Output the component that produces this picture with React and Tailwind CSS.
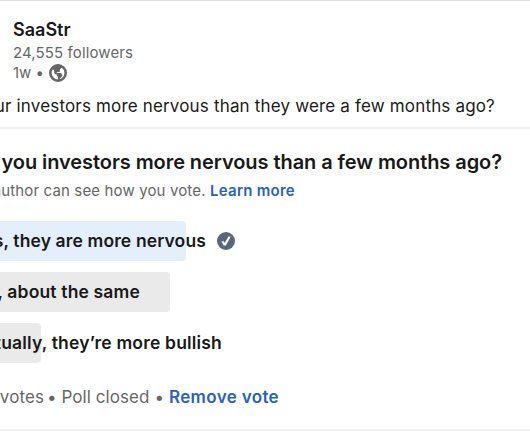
function GlobeIcon() {
  return (
    <svg viewBox="1 1 14 14" className="h-[18px] w-[18px] shrink-0 fill-[#666666]">
      <path d="M8 1a7 7 0 107 7 7 7 0 00-7-7zM3 8a5 5 0 011-3l.55.55A1.5 1.5 0 015 6.62v1.07a.75.75 0 00.22.53l.56.56a.75.75 0 00.53.22H7v.69a.75.75 0 00.22.53l.56.56a.75.75 0 01.22.53V13a5 5 0 01-5-5zm6.24 4.83l2-2.46a.75.75 0 00.09-.8l-.58-1.16A.76.76 0 0010 8H7v-.19a.51.51 0 01.28-.45l.38-.19a.74.74 0 01.68 0L9 7.5l.38-.7a1 1 0 00.12-.48v-.85a.78.78 0 01.21-.53l1.07-1.09a5 5 0 01-1.54 9z" />
    </svg>
  );
}

function CheckIcon() {
  return (
    <svg viewBox="0 0 18 18" className="h-[18px] w-[18px] shrink-0">
      <circle cx="9" cy="9" r="9" className="fill-[#56687a]" />
      <path d="M4.4 9.3h2.2l1.1 1.7 3.8-6.5h2.3L8.8 13.4H6.7z" className="fill-white" />
    </svg>
  );
}

function Option({ bar, label, textEnd, children }) {
  return (
    <div className="grid h-10 items-center">
      <div className={`col-start-1 row-start-1 h-10 rounded-r ${bar}`} />
      <div className="col-start-1 row-start-1 flex items-center gap-[11px]">
        <div className={`flex justify-end text-[17.5px] leading-10 font-semibold ${textEnd}`}>
          <span>{label}</span>
        </div>
        {children}
      </div>
    </div>
  );
}

export default function App() {
  return (
    <div className="flex h-[442px] w-[530px] flex-col overflow-hidden border-t border-[#dfdfdf] bg-white font-['Inter','Liberation_Sans',sans-serif] whitespace-nowrap text-[#191919]">
      <header className="flex flex-col pt-[17px] pl-[13px]">
        <h1 className="h-[24px] text-[18px] leading-[24px] font-semibold">SaaStr</h1>
        <p className="h-[22px] text-[15px] leading-[22px] tracking-[0.12px] text-[#666666]">24,555 followers</p>
        <div className="flex h-[18px] items-center text-[15px] text-[#666666]">
          <span className="w-[36px]">1w •</span>
          <GlobeIcon />
        </div>
      </header>
      <p className="mt-[12px] flex h-[24px] w-[495px] justify-end text-[17px] leading-[24px] tracking-[0.17px]">
        <span>ur investors more nervous than they were a few months ago?</span>
      </p>
      <section className="mt-[9px] flex h-[304px] flex-col border-y-2 border-[#f1f1f1]">
        <h2 className="mt-[19px] flex h-[28px] w-[502px] justify-end text-[20px] leading-[28px] font-semibold tracking-[-0.07px]">
          <span>you investors more nervous than a few months ago?</span>
        </h2>
        <p className="mt-[4px] flex h-[22px] w-[295px] justify-end text-[15px] leading-[22px] tracking-[0.14px] text-[#666666]">
          <span>
            author can see how you vote. <a className="font-semibold tracking-[0.27px] text-[#2b62bd]">Learn more</a>
          </span>
        </p>
        <div className="mt-[19px] flex flex-col gap-[11px]">
          <Option bar="w-[186px] bg-[#e5eefb]" textEnd="w-[206px] tracking-[0.13px]" label="s, they are more nervous">
            <CheckIcon />
          </Option>
          <Option bar="w-[170px] bg-[#eaeaea]" textEnd="w-[140px] tracking-[0.16px]" label=", about the same" />
          <Option bar="w-[41px] bg-[#eaeaea]" textEnd="w-[222px] tracking-[0.18px]" label="tually, they’re more bullish" />
        </div>
        <p className="mt-[22px] flex h-[24px] w-[279px] justify-end text-[17px] leading-[24px] tracking-[0.08px] text-[#666666]">
          <span>
            <span className="-mr-[2px] tracking-[0.1px]">votes</span> • Poll closed •{' '}
            <a className="font-semibold tracking-[0.35px] text-[#2b62bd]">Remove vote</a>
          </span>
        </p>
      </section>
    </div>
  );
}
